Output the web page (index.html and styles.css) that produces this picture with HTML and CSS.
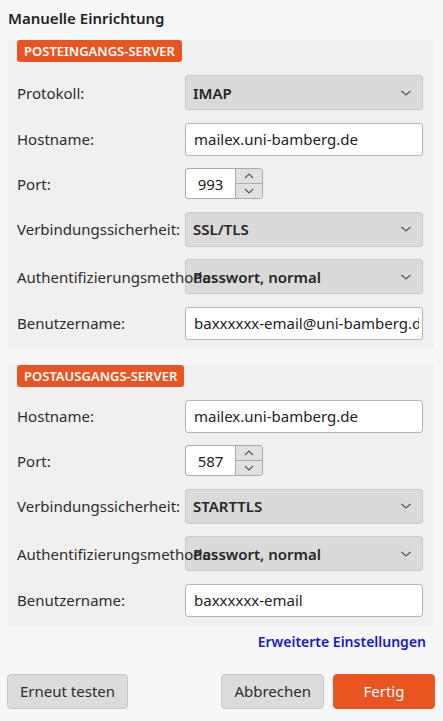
FILE: index.html
```html
<!DOCTYPE html>
<html lang="de">
<head>
<meta charset="utf-8">
<title>Manuelle Einrichtung</title>
<link rel="stylesheet" href="styles.css">
</head>
<body>
<div class="dialog">
  <h1 class="title">Manuelle Einrichtung</h1>

  <section class="group">
    <div class="badge">POSTEINGANGS-SERVER</div>
    <div class="form">
      <div class="label">Protokoll:</div>
      <div class="select"><span>IMAP</span><svg class="chev" width="12" height="8" viewBox="0 0 12 8"><path d="M1.5 2 L6 6 L10.5 2" fill="none" stroke="#555" stroke-width="1.1"/></svg></div>

      <div class="label">Hostname:</div>
      <div class="input"><span class="val">mailex.uni-bamberg.de</span></div>

      <div class="label">Port:</div>
      <div class="spin">
        <div class="spin-val">993</div>
        <div class="spin-btns">
          <div class="spin-btn"><svg width="12" height="8" viewBox="0 0 12 8"><path d="M2 6 L6 2 L10 6" fill="none" stroke="#555" stroke-width="1.1"/></svg></div>
          <div class="spin-btn"><svg width="12" height="8" viewBox="0 0 12 8"><path d="M2 2 L6 6 L10 2" fill="none" stroke="#555" stroke-width="1.1"/></svg></div>
        </div>
      </div>

      <div class="label">Verbindungssicherheit:</div>
      <div class="select"><span>SSL/TLS</span><svg class="chev" width="12" height="8" viewBox="0 0 12 8"><path d="M1.5 2 L6 6 L10.5 2" fill="none" stroke="#555" stroke-width="1.1"/></svg></div>

      <div class="label over">Authentifizierungsmethode:</div>
      <div class="select"><span>Passwort, normal</span><svg class="chev" width="12" height="8" viewBox="0 0 12 8"><path d="M1.5 2 L6 6 L10.5 2" fill="none" stroke="#555" stroke-width="1.1"/></svg></div>

      <div class="label">Benutzername:</div>
      <div class="input"><span class="val">baxxxxxx-email@uni-bamberg.de</span></div>
    </div>
  </section>

  <section class="group second">
    <div class="badge">POSTAUSGANGS-SERVER</div>
    <div class="form">
      <div class="label">Hostname:</div>
      <div class="input"><span class="val">mailex.uni-bamberg.de</span></div>

      <div class="label">Port:</div>
      <div class="spin">
        <div class="spin-val">587</div>
        <div class="spin-btns">
          <div class="spin-btn"><svg width="12" height="8" viewBox="0 0 12 8"><path d="M2 6 L6 2 L10 6" fill="none" stroke="#555" stroke-width="1.1"/></svg></div>
          <div class="spin-btn"><svg width="12" height="8" viewBox="0 0 12 8"><path d="M2 2 L6 6 L10 2" fill="none" stroke="#555" stroke-width="1.1"/></svg></div>
        </div>
      </div>

      <div class="label">Verbindungssicherheit:</div>
      <div class="select"><span>STARTTLS</span><svg class="chev" width="12" height="8" viewBox="0 0 12 8"><path d="M1.5 2 L6 6 L10.5 2" fill="none" stroke="#555" stroke-width="1.1"/></svg></div>

      <div class="label over">Authentifizierungsmethode:</div>
      <div class="select"><span>Passwort, normal</span><svg class="chev" width="12" height="8" viewBox="0 0 12 8"><path d="M1.5 2 L6 6 L10.5 2" fill="none" stroke="#555" stroke-width="1.1"/></svg></div>

      <div class="label">Benutzername:</div>
      <div class="input"><span class="val">baxxxxxx-email</span></div>
    </div>
  </section>

  <div class="link-row"><a class="link" href="#">Erweiterte Einstellungen</a></div>

  <div class="buttons">
    <button class="btn">Erneut testen</button>
    <div class="spacer"></div>
    <button class="btn">Abbrechen</button>
    <button class="btn primary">Fertig</button>
  </div>
</div>
</body>
</html>
```

FILE: styles.css
```css
* { box-sizing: border-box; }

html, body {
  margin: 0;
  padding: 0;
  background: #f7f7f7;
}

body {
  font-family: "Noto Sans", "Open Sans", sans-serif;
  color: #2d2d2d;
  font-size: 15px;
}

.dialog {
  padding: 0 8px;
}

.title {
  margin: 8px 0 0 0;
  font-size: 15px;
  line-height: 20px;
  font-weight: 600;
  color: #222;
}

.group {
  margin-top: 24px;
  margin-right: 2px;
  background: #f0f0f0;
  padding: 0 10px 9px 9px;
}

.group.second {
  margin-top: 28px;
}

.badge {
  position: relative;
  display: block;
  width: fit-content;
  margin-top: -12px;
  height: 22px;
  line-height: 22px;
  padding: 0 7px;
  background: #e95420;
  color: #fff;
  font-size: 13px;
  font-weight: 600;
  border-radius: 3px;
}

.form {
  margin-top: 13px;
  display: grid;
  grid-template-columns: 168px minmax(0, 1fr);
  row-gap: 12.5px;
  align-items: center;
}

.label {
  white-space: nowrap;
  font-size: 15px;
  line-height: 20px;
  color: #2d2d2d;
}

.label.over {
  position: relative;
  z-index: 1;
}

.select {
  height: 35px;
  background: #dadada;
  border: 1px solid #c9c9c9;
  border-radius: 3px;
  display: flex;
  align-items: center;
  justify-content: space-between;
  padding: 0 10px 0 7px;
  font-size: 15px;
  font-weight: 600;
  color: #262626;
}

.chev {
  display: block;
}

.input {
  min-width: 0;
  height: 33px;
  background: #fff;
  border: 1px solid #b4b4b4;
  border-radius: 3px;
  display: flex;
  align-items: center;
  padding: 0 3px 0 8px;
  font-size: 15px;
  color: #222;
  white-space: nowrap;
  overflow: hidden;
}

.input .val {
  display: block;
  overflow: hidden;
  min-width: 0;
}

.spin {
  width: 78px;
  height: 31px;
  display: flex;
  border: 1px solid #a9a9a9;
  border-radius: 3px;
  background: #fff;
  overflow: hidden;
}

.spin-val {
  width: 49px;
  display: flex;
  align-items: center;
  justify-content: center;
  font-size: 15px;
  color: #222;
}

.spin-btns {
  flex: 1;
  display: flex;
  flex-direction: column;
  border-left: 1px solid #a9a9a9;
}

.spin-btn {
  flex: 1;
  background: #e1e1e1;
  display: flex;
  align-items: center;
  justify-content: center;
}

.spin-btn + .spin-btn {
  border-top: 1px solid #a9a9a9;
}

.link-row {
  margin-top: 6px;
  display: flex;
  justify-content: flex-end;
  padding-right: 9px;
  line-height: 20px;
}

.link {
  color: #1818c8;
  text-decoration: none;
  font-size: 14px;
  font-weight: 600;
}

.buttons {
  margin-top: 22px;
  display: flex;
  gap: 9px;
  margin-left: -1px;
}

.spacer {
  flex: 1;
}

.btn {
  height: 35px;
  font-family: "Noto Sans", "Open Sans", sans-serif;
  font-size: 15px;
  color: #2d2d2d;
  background: #dcdcdc;
  border: 1px solid #c6c6c6;
  border-radius: 4px;
  padding: 0 12px;
}

.btn.primary {
  width: 102px;
  background: #e95420;
  border-color: #e95420;
  color: #fff;
}
```
